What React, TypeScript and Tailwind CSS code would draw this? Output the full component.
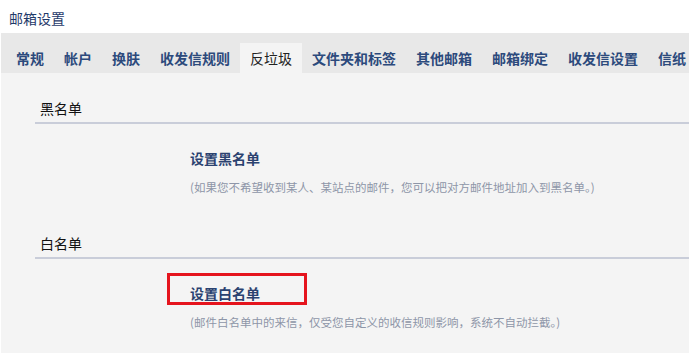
import React from "react";

const tabs = [
  "常规",
  "帐户",
  "换肤",
  "收发信规则",
  "反垃圾",
  "文件夹和标签",
  "其他邮箱",
  "邮箱绑定",
  "收发信设置",
  "信纸",
];

const ACTIVE = "反垃圾";

function Section({
  title,
  link,
  desc,
  marked,
  first,
}: {
  title: string;
  link: string;
  desc: string;
  marked?: boolean;
  first?: boolean;
}) {
  return (
    <div className={first ? "mt-[25px]" : "mt-[38px]"}>
      <div className="pl-[5px] pb-[4px] text-[14px] leading-[20px] text-[#111] border-b-2 border-[#c9cdd9]">
        {title}
      </div>
      <div className="ml-[155px] mt-[24px]">
        <div className="relative w-fit">
          <span className="block text-[14px] leading-[20px] font-bold text-[#2b4270] cursor-pointer">
            {link}
          </span>
          {/* red annotation box */}
          {marked && (
            <div className="absolute left-[-23px] top-[-10px] w-[140px] h-[32px] border-[3px] border-[#e5141d] pointer-events-none" />
          )}
        </div>
        <p className="mt-[11px] text-[11.5px] leading-[16px] text-[#8e96a8] whitespace-nowrap">
          {desc}
        </p>
      </div>
    </div>
  );
}

export default function App() {
  return (
    <div
      className="w-[689px] h-[353px] bg-white overflow-hidden flex flex-col"
      style={{ fontFamily: '"Noto Sans CJK SC", "Noto Sans", sans-serif' }}
    >
      {/* Header */}
      <div className="h-[33px] pl-[9px] pt-[9px] text-[14px] leading-[18px] text-[#1f3a6a]">
        邮箱设置
      </div>

      {/* Tabs */}
      <div className="ml-[1px] h-[40px] bg-[#e8e8e8] flex items-end pl-[5px] overflow-hidden whitespace-nowrap">
        {tabs.map((t) => (
          <div
            key={t}
            className={`h-[30px] px-[10px] text-[14px] leading-[30px] shrink-0 ${
              t === ACTIVE
                ? "bg-[#f4f4f4] text-[#222]"
                : "font-bold text-[#2c4a7c]"
            }`}
          >
            {t}
          </div>
        ))}
      </div>

      {/* Content */}
      <div className="ml-[1px] flex-1 bg-[#f4f4f4] pl-[34px]">
        <Section
          first
          title="黑名单"
          link="设置黑名单"
          desc="(如果您不希望收到某人、某站点的邮件，您可以把对方邮件地址加入到黑名单。)"
        />
        <Section
          marked
          title="白名单"
          link="设置白名单"
          desc="(邮件白名单中的来信，仅受您自定义的收信规则影响，系统不自动拦截。)"
        />
      </div>
    </div>
  );
}
